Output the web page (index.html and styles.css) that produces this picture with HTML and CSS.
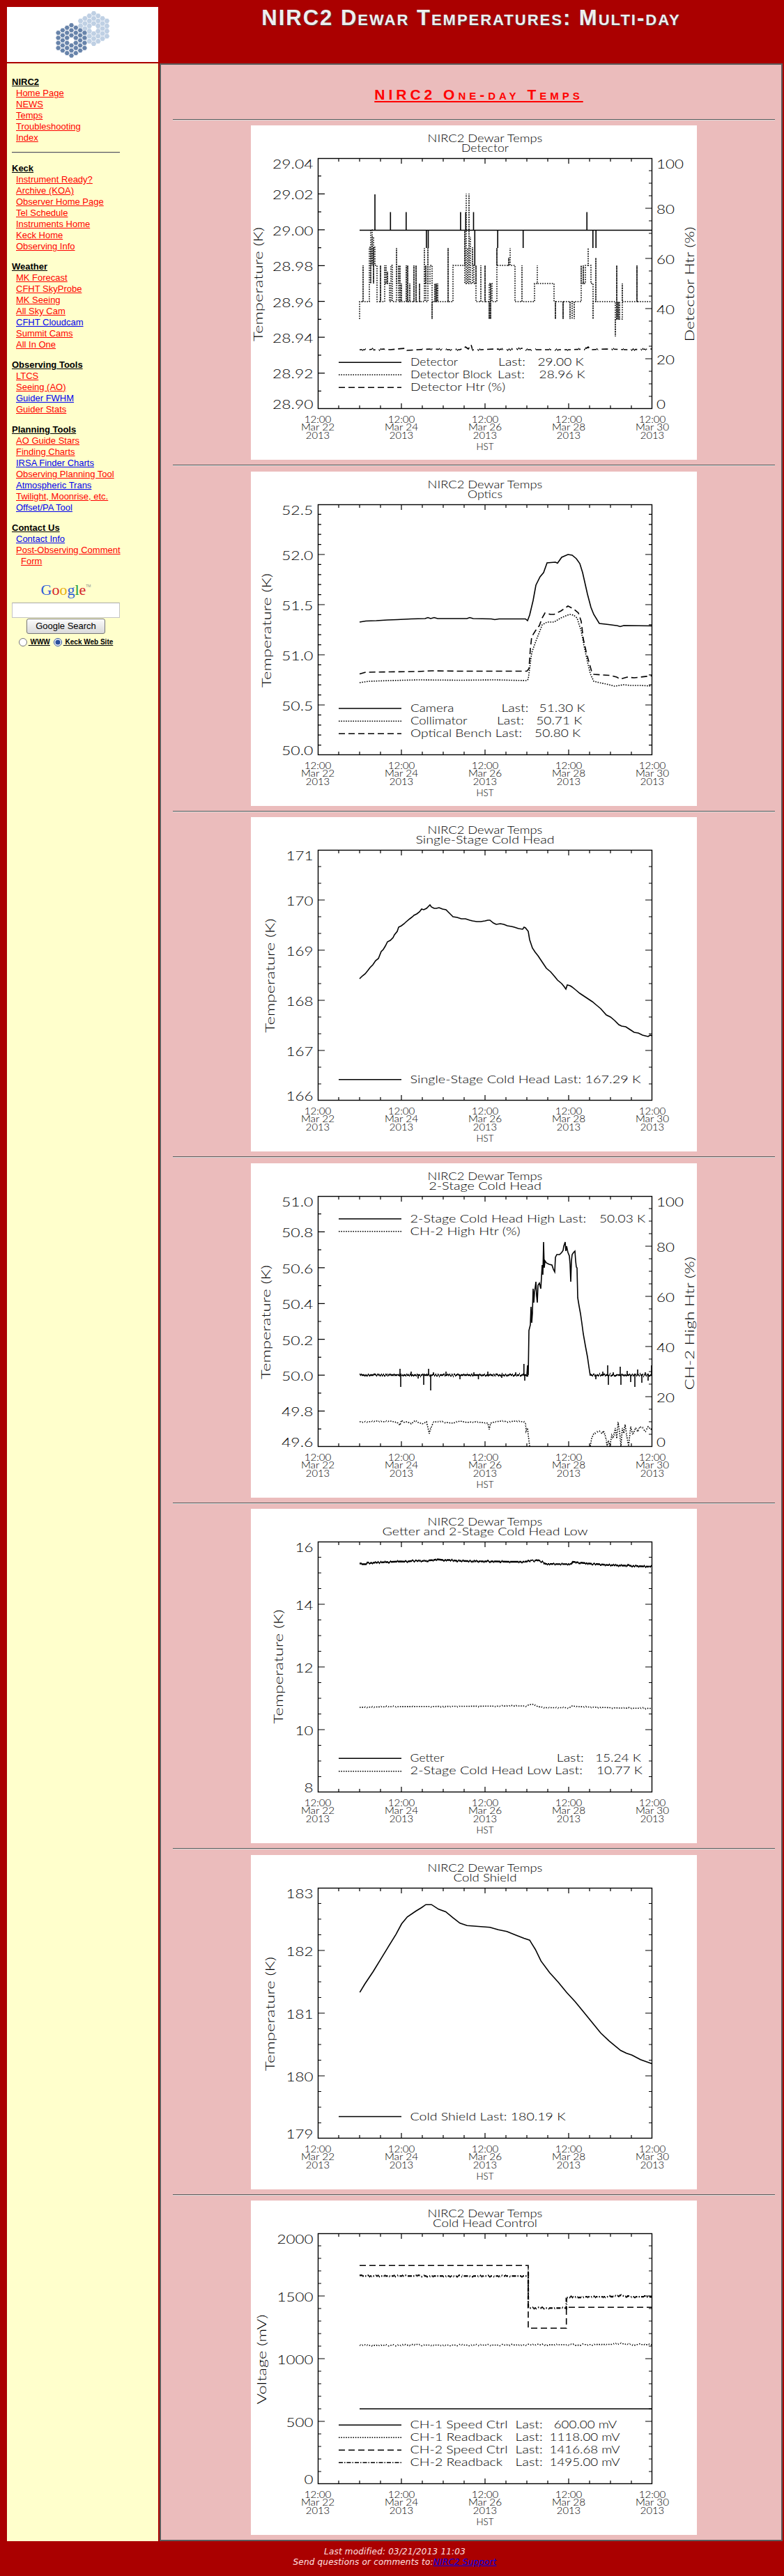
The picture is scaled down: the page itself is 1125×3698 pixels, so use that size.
FILE: index.html
```html
<!DOCTYPE html>
<html lang="en">
<head>
<meta charset="utf-8">
<title>NIRC2 Dewar Temperatures: Multi-day</title>
<link rel="stylesheet" href="styles.css">
</head>
<body>
<div class="page">
  <div class="logo">
    <svg width="217" height="79" viewBox="0 0 217 79">
      <defs>
        <polygon id="hx" points="3.8,0 1.9,3.3 -1.9,3.3 -3.8,0 -1.9,-3.3 1.9,-3.3"/>
        <g id="mir">
          <use href="#hx" x="-18.9" y="-10.91"/><use href="#hx" x="-18.9" y="-3.64"/><use href="#hx" x="-18.9" y="3.64"/><use href="#hx" x="-18.9" y="10.91"/>
          <use href="#hx" x="-12.6" y="-14.55"/><use href="#hx" x="-12.6" y="-7.27"/><use href="#hx" x="-12.6" y="0"/><use href="#hx" x="-12.6" y="7.27"/><use href="#hx" x="-12.6" y="14.55"/>
          <use href="#hx" x="-6.3" y="-18.19"/><use href="#hx" x="-6.3" y="-10.91"/><use href="#hx" x="-6.3" y="-3.64"/><use href="#hx" x="-6.3" y="3.64"/><use href="#hx" x="-6.3" y="10.91"/><use href="#hx" x="-6.3" y="18.19"/>
          <use href="#hx" x="0" y="-21.82"/><use href="#hx" x="0" y="-14.55"/><use href="#hx" x="0" y="-7.27"/><use href="#hx" x="0" y="7.27"/><use href="#hx" x="0" y="14.55"/><use href="#hx" x="0" y="21.82"/>
          <use href="#hx" x="6.3" y="-18.19"/><use href="#hx" x="6.3" y="-10.91"/><use href="#hx" x="6.3" y="-3.64"/><use href="#hx" x="6.3" y="3.64"/><use href="#hx" x="6.3" y="10.91"/><use href="#hx" x="6.3" y="18.19"/>
          <use href="#hx" x="12.6" y="-14.55"/><use href="#hx" x="12.6" y="-7.27"/><use href="#hx" x="12.6" y="0"/><use href="#hx" x="12.6" y="7.27"/><use href="#hx" x="12.6" y="14.55"/>
          <use href="#hx" x="18.9" y="-10.91"/><use href="#hx" x="18.9" y="-3.64"/><use href="#hx" x="18.9" y="3.64"/><use href="#hx" x="18.9" y="10.91"/>
        </g>
      </defs>
      <use href="#mir" x="124.5" y="31" class="seg-light"/>
      <use href="#mir" x="92.5" y="48" class="seg-dark"/>
    </svg>
  </div>
  <div class="banner"><h1>NIRC2 Dewar Temperatures: Multi-day</h1></div>

  <nav class="side">
    <div class="nav">
      <div class="sec">
        <div class="sec-title">NIRC2</div>
        <a href="#">Home Page</a>
        <a href="#">NEWS</a>
        <a href="#">Temps</a>
        <a href="#">Troubleshooting</a>
        <a href="#">Index</a>
      </div>
      <hr>
      <div class="sec">
        <div class="sec-title">Keck</div>
        <a href="#">Instrument Ready?</a>
        <a href="#">Archive (KOA)</a>
        <a href="#">Observer Home Page</a>
        <a href="#">Tel Schedule</a>
        <a href="#">Instruments Home</a>
        <a href="#">Keck Home</a>
        <a href="#">Observing Info</a>
      </div>
      <div class="sec">
        <div class="sec-title">Weather</div>
        <a href="#">MK Forecast</a>
        <a href="#">CFHT SkyProbe</a>
        <a href="#">MK Seeing</a>
        <a href="#">All Sky Cam</a>
        <a class="b" href="#">CFHT Cloudcam</a>
        <a href="#">Summit Cams</a>
        <a href="#">All In One</a>
      </div>
      <div class="sec">
        <div class="sec-title">Observing Tools</div>
        <a href="#">LTCS</a>
        <a href="#">Seeing (AO)</a>
        <a class="b" href="#">Guider FWHM</a>
        <a href="#">Guider Stats</a>
      </div>
      <div class="sec">
        <div class="sec-title">Planning Tools</div>
        <a href="#">AO Guide Stars</a>
        <a href="#">Finding Charts</a>
        <a class="b" href="#">IRSA Finder Charts</a>
        <a href="#">Observing Planning Tool</a>
        <a class="b" href="#">Atmospheric Trans</a>
        <a href="#">Twilight, Moonrise, etc.</a>
        <a class="b" href="#">Offset/PA Tool</a>
      </div>
      <div class="sec">
        <div class="sec-title">Contact Us</div>
        <a class="b" href="#">Contact Info</a>
        <a href="#">Post-Observing Comment Form</a>
      </div>
      <form class="gsearch" action="#">
        <div class="glogo"><span class="gb">G</span><span class="gr">o</span><span class="gy">o</span><span class="gb">g</span><span class="gg">l</span><span class="gr">e</span><span class="tm">TM</span></div>
        <input class="q" type="text" name="q">
        <button class="btn" type="button">Google Search</button>
        <div class="radios">
          <label><input type="radio" name="site"><u>&nbsp;WWW</u></label>
          <label><input type="radio" name="site" checked><u>&nbsp;Keck Web Site</u></label>
        </div>
      </form>
    </div>
  </nav>

  <main class="content">
    <h2><a href="#">NIRC2 One-day Temps</a></h2>
    <hr class="rule">

    <!-- Chart 1: Detector -->
    <svg class="plot" width="640" height="480" viewBox="0 0 640 480">
      <defs>
        <filter id="nzA" filterUnits="userSpaceOnUse" x="0" y="0" width="640" height="480" color-interpolation-filters="sRGB">
          <feTurbulence type="fractalNoise" baseFrequency="0.5 0.003" numOctaves="1" seed="4" result="t"/>
          <feColorMatrix in="t" type="matrix" values="0 0 0 0 0.5  0 1 0 0 0  0 0 0 0 0  0 0 0 0 1" result="m"/>
          <feDisplacementMap in="SourceGraphic" in2="m" scale="4" xChannelSelector="R" yChannelSelector="G"/>
        </filter>
        <filter id="nzB" filterUnits="userSpaceOnUse" x="0" y="0" width="640" height="480" color-interpolation-filters="sRGB">
          <feTurbulence type="fractalNoise" baseFrequency="0.6 0.003" numOctaves="1" seed="9" result="t"/>
          <feColorMatrix in="t" type="matrix" values="0 0 0 0 0.5  0 1 0 0 0  0 0 0 0 0  0 0 0 0 1" result="m"/>
          <feDisplacementMap in="SourceGraphic" in2="m" scale="8" xChannelSelector="R" yChannelSelector="G"/>
        </filter>
        <path id="xt" d="M126 407v-5M156 407v-5M186 407v-5M216 407v-8M246 407v-5M276 407v-5M306 407v-5M336 407v-8M366 407v-5M396 407v-5M426 407v-5M456 407v-8M486 407v-5M516 407v-5M546 407v-5M126 47v5M156 47v5M186 47v5M216 47v8M246 47v5M276 47v5M306 47v5M336 47v8M366 47v5M396 47v5M426 47v5M456 47v8M486 47v5M516 47v5M546 47v5"/>
        <path id="y7i" d="M96 355.6h10M96 304.1h10M96 252.7h10M96 201.3h10M96 149.9h10M96 98.4h10M96 381.3h5M96 329.9h5M96 278.4h5M96 227h5M96 175.6h5M96 124.1h5M96 72.7h5"/>
        <path id="yr" d="M576 335h-10M576 263h-10M576 191h-10M576 119h-10M576 389h-5M576 371h-5M576 353h-5M576 317h-5M576 299h-5M576 281h-5M576 245h-5M576 227h-5M576 209h-5M576 173h-5M576 155h-5M576 137h-5M576 101h-5M576 83h-5M576 65h-5"/>
      </defs>
      <rect class="bg" width="640" height="480"/>
      <rect class="fr" x="96.5" y="47.5" width="479" height="359"/>
      <use class="ax" href="#xt"/>
      <use class="ax" href="#y7i"/>
      <use class="ax" href="#yr"/>
      <text class="pt mid" x="336" y="23.5" textLength="164.8" lengthAdjust="spacingAndGlyphs">NIRC2 Dewar Temps</text>
      <text class="pt mid" x="336" y="38.3" textLength="68.1" lengthAdjust="spacingAndGlyphs">Detector</text>
      <text class="pk end" x="89.5" y="61.5" textLength="58.5" lengthAdjust="spacingAndGlyphs">29.04</text>
      <text class="pk end" x="89.5" y="106.2" textLength="58.5" lengthAdjust="spacingAndGlyphs">29.02</text>
      <text class="pk end" x="89.5" y="157.7" textLength="58.5" lengthAdjust="spacingAndGlyphs">29.00</text>
      <text class="pk end" x="89.5" y="209.1" textLength="58.5" lengthAdjust="spacingAndGlyphs">28.98</text>
      <text class="pk end" x="89.5" y="260.5" textLength="58.5" lengthAdjust="spacingAndGlyphs">28.96</text>
      <text class="pk end" x="89.5" y="311.9" textLength="58.5" lengthAdjust="spacingAndGlyphs">28.94</text>
      <text class="pk end" x="89.5" y="363.4" textLength="58.5" lengthAdjust="spacingAndGlyphs">28.92</text>
      <text class="pk end" x="89.5" y="407" textLength="58.5" lengthAdjust="spacingAndGlyphs">28.90</text>
      <text class="pk" x="582" y="61.5" textLength="39" lengthAdjust="spacingAndGlyphs">100</text>
      <text class="pk" x="582" y="126.8" textLength="26" lengthAdjust="spacingAndGlyphs">80</text>
      <text class="pk" x="582" y="198.8" textLength="26" lengthAdjust="spacingAndGlyphs">60</text>
      <text class="pk" x="582" y="270.8" textLength="26" lengthAdjust="spacingAndGlyphs">40</text>
      <text class="pk" x="582" y="342.8" textLength="26" lengthAdjust="spacingAndGlyphs">20</text>
      <text class="pk" x="582" y="407" textLength="13" lengthAdjust="spacingAndGlyphs">0</text>
      <text class="pk mid" transform="translate(17 228) rotate(-90)" textLength="164" lengthAdjust="spacingAndGlyphs">Temperature (K)</text>
      <text class="pk mid" transform="translate(635.5 228) rotate(-90)" textLength="165" lengthAdjust="spacingAndGlyphs">Detector Htr (%)</text>
      <text class="px" x="96" y="426.7" textLength="38.7" lengthAdjust="spacingAndGlyphs">12:00</text>
      <text class="px" x="216" y="426.7" textLength="38.7" lengthAdjust="spacingAndGlyphs">12:00</text>
      <text class="px" x="336" y="426.7" textLength="38.7" lengthAdjust="spacingAndGlyphs">12:00</text>
      <text class="px" x="456" y="426.7" textLength="38.7" lengthAdjust="spacingAndGlyphs">12:00</text>
      <text class="px" x="576" y="426.7" textLength="38.7" lengthAdjust="spacingAndGlyphs">12:00</text>
      <text class="px" x="96" y="438.3" textLength="48" lengthAdjust="spacingAndGlyphs">Mar 22</text>
      <text class="px" x="216" y="438.3" textLength="48" lengthAdjust="spacingAndGlyphs">Mar 24</text>
      <text class="px" x="336" y="438.3" textLength="48" lengthAdjust="spacingAndGlyphs">Mar 26</text>
      <text class="px" x="456" y="438.3" textLength="48" lengthAdjust="spacingAndGlyphs">Mar 28</text>
      <text class="px" x="576" y="438.3" textLength="48" lengthAdjust="spacingAndGlyphs">Mar 30</text>
      <text class="px" x="96" y="449.5" textLength="34.4" lengthAdjust="spacingAndGlyphs">2013</text>
      <text class="px" x="216" y="449.5" textLength="34.4" lengthAdjust="spacingAndGlyphs">2013</text>
      <text class="px" x="336" y="449.5" textLength="34.4" lengthAdjust="spacingAndGlyphs">2013</text>
      <text class="px" x="456" y="449.5" textLength="34.4" lengthAdjust="spacingAndGlyphs">2013</text>
      <text class="px" x="576" y="449.5" textLength="34.4" lengthAdjust="spacingAndGlyphs">2013</text>
      <text class="px" x="336" y="466" textLength="25" lengthAdjust="spacingAndGlyphs">HST</text>
      <path class="ln" d="M126 340.3H216"/>
      <path class="ln dot" d="M126 358H216"/>
      <path class="ln dash" d="M126 376.3H216"/>
      <text class="pt" x="229" y="345" textLength="68.1" lengthAdjust="spacingAndGlyphs">Detector</text>
      <text class="pt" x="355" y="345" textLength="39" lengthAdjust="spacingAndGlyphs">Last:</text>
      <text class="pt" x="411.5" y="345" textLength="66" lengthAdjust="spacingAndGlyphs">29.00 K</text>
      <text class="pt" x="229" y="362.7" textLength="117" lengthAdjust="spacingAndGlyphs">Detector Block</text>
      <text class="pt" x="354" y="362.7" textLength="39" lengthAdjust="spacingAndGlyphs">Last:</text>
      <text class="pt" x="413.6" y="362.7" textLength="66" lengthAdjust="spacingAndGlyphs">28.96 K</text>
      <text class="pt" x="229" y="380.7" textLength="136.2" lengthAdjust="spacingAndGlyphs">Detector Htr (%)</text>
      <path class="ln" d="M156 150.5H576M178 150.5V99M200.3 150.5V124.5M222.8 150.5V124.5M300.9 150.5V124.5M308.3 150.5V124.5M319.5 150.5V124.5M482.2 150.5V124.5M251.9 150.5V176M254.5 150.5V176M354.2 150.5V176M390.7 150.5V176M490.8 150.5V176M495.2 150.5V176M321.3 150.5V201.5"/>
      <path class="ln dot" d="M156 278V253H161V201V253H170V227V175H172V227V150H174V201V160H176V227V175H178V201H181V253H186V201V253H192V201V227H194V201V227H196V210V227H199V253H201V201H203V253H209V176V227H212V201V253H214V201V253H216V227V253H219V253H223V201V253H225V201V253H228V227V253H234V201V253H237V201V253H242V227V253H249V176V227H251V201V253H254V176V227H257V201H260V278V253H264V227V253H266V227V253H268V227V253H275V253H283V176V253H290V201H303V201H307V150V227H309V98V227H311V176V227H313V98V201H315V160V227H318V175V201H320V227H323V201V253H330V201V253H336V201V253H342V278V227H344V278V227H346V253H353V176V201H360V201H370V190V201H372V176V201H379V253H389V201V253H405V253H407V227H411V201V227H434V227H435V253H437V278V253H448V278V253H458V278V253H461V278V253H464V278V253H470V253H474V201V227H477V201V227H480V201H484V176V201H488V201V227H491V278V253H495V190V253H500V253H523V303V278H525V201V278H527V253V278H529V253V278H533V227V253H554V201V253H559V253H576"/>
      <path class="ln dash" filter="url(#nzA)" d="M156 322L170 322L175 321L180 323L190 321L200 322L210 321L222 320L224 323L240 322L260 321L280 322L300 322L305 320L308 318L312 321L316 315L318 322L330 322L350 321L370 322L390 320L392 322L420 322L460 322L480 321L484 318L488 322L510 321L540 322L576 321"/>
    </svg>
    <hr class="sep">

    <!-- Chart 2: Optics -->
    <svg class="plot" width="640" height="480" viewBox="0 0 640 480">
      <defs>
        <path id="y5f" d="M96 335h10M96 263h10M96 191h10M96 119h10M96 392.6h5M96 378.2h5M96 363.8h5M96 349.4h5M96 320.6h5M96 306.2h5M96 291.8h5M96 277.4h5M96 248.6h5M96 234.2h5M96 219.8h5M96 205.4h5M96 176.6h5M96 162.2h5M96 147.8h5M96 133.4h5M96 104.6h5M96 90.2h5M96 75.8h5M96 61.4h5"/>
      </defs>
      <rect class="bg" width="640" height="480"/>
      <rect class="fr" x="96.5" y="47.5" width="479" height="359"/>
      <use class="ax" href="#xt"/>
      <use class="ax" href="#y5f"/>
      <use class="ax" href="#y5f" transform="matrix(-1 0 0 1 672 0)"/>
      <text class="pt mid" x="336" y="23.5" textLength="164.8" lengthAdjust="spacingAndGlyphs">NIRC2 Dewar Temps</text>
      <text class="pt mid" x="336" y="38.3" textLength="50" lengthAdjust="spacingAndGlyphs">Optics</text>
      <text class="pk end" x="89.5" y="61.5" textLength="45.5" lengthAdjust="spacingAndGlyphs">52.5</text>
      <text class="pk end" x="89.5" y="126.8" textLength="45.5" lengthAdjust="spacingAndGlyphs">52.0</text>
      <text class="pk end" x="89.5" y="198.8" textLength="45.5" lengthAdjust="spacingAndGlyphs">51.5</text>
      <text class="pk end" x="89.5" y="270.8" textLength="45.5" lengthAdjust="spacingAndGlyphs">51.0</text>
      <text class="pk end" x="89.5" y="342.8" textLength="45.5" lengthAdjust="spacingAndGlyphs">50.5</text>
      <text class="pk end" x="89.5" y="407" textLength="45.5" lengthAdjust="spacingAndGlyphs">50.0</text>
      <text class="pk mid" transform="translate(28.5 228) rotate(-90)" textLength="164" lengthAdjust="spacingAndGlyphs">Temperature (K)</text>
      <text class="px" x="96" y="426.7" textLength="38.7" lengthAdjust="spacingAndGlyphs">12:00</text>
      <text class="px" x="216" y="426.7" textLength="38.7" lengthAdjust="spacingAndGlyphs">12:00</text>
      <text class="px" x="336" y="426.7" textLength="38.7" lengthAdjust="spacingAndGlyphs">12:00</text>
      <text class="px" x="456" y="426.7" textLength="38.7" lengthAdjust="spacingAndGlyphs">12:00</text>
      <text class="px" x="576" y="426.7" textLength="38.7" lengthAdjust="spacingAndGlyphs">12:00</text>
      <text class="px" x="96" y="438.3" textLength="48" lengthAdjust="spacingAndGlyphs">Mar 22</text>
      <text class="px" x="216" y="438.3" textLength="48" lengthAdjust="spacingAndGlyphs">Mar 24</text>
      <text class="px" x="336" y="438.3" textLength="48" lengthAdjust="spacingAndGlyphs">Mar 26</text>
      <text class="px" x="456" y="438.3" textLength="48" lengthAdjust="spacingAndGlyphs">Mar 28</text>
      <text class="px" x="576" y="438.3" textLength="48" lengthAdjust="spacingAndGlyphs">Mar 30</text>
      <text class="px" x="96" y="449.5" textLength="34.4" lengthAdjust="spacingAndGlyphs">2013</text>
      <text class="px" x="216" y="449.5" textLength="34.4" lengthAdjust="spacingAndGlyphs">2013</text>
      <text class="px" x="336" y="449.5" textLength="34.4" lengthAdjust="spacingAndGlyphs">2013</text>
      <text class="px" x="456" y="449.5" textLength="34.4" lengthAdjust="spacingAndGlyphs">2013</text>
      <text class="px" x="576" y="449.5" textLength="34.4" lengthAdjust="spacingAndGlyphs">2013</text>
      <text class="px" x="336" y="466" textLength="25" lengthAdjust="spacingAndGlyphs">HST</text>
      <path class="ln" d="M126 340H216"/>
      <path class="ln dot" d="M126 358.3H216"/>
      <path class="ln dash" d="M126 376.3H216"/>
      <text class="pt" x="229" y="345" textLength="62.4" lengthAdjust="spacingAndGlyphs">Camera</text>
      <text class="pt" x="359.4" y="345" textLength="39" lengthAdjust="spacingAndGlyphs">Last:</text>
      <text class="pt" x="413.6" y="345" textLength="66" lengthAdjust="spacingAndGlyphs">51.30 K</text>
      <text class="pt" x="229" y="363" textLength="81.6" lengthAdjust="spacingAndGlyphs">Collimator</text>
      <text class="pt" x="352.9" y="363" textLength="39" lengthAdjust="spacingAndGlyphs">Last:</text>
      <text class="pt" x="409.3" y="363" textLength="66" lengthAdjust="spacingAndGlyphs">50.71 K</text>
      <text class="pt" x="229" y="381" textLength="160" lengthAdjust="spacingAndGlyphs">Optical Bench Last:</text>
      <text class="pt" x="407.1" y="381" textLength="66" lengthAdjust="spacingAndGlyphs">50.80 K</text>
      <path class="ln" d="M156 216L165 214.5L180 214L196 213L210 212.5L230 211.5L250 211L254 209.5L258 211L263 209.5L268 211L310 211L314 209.5L319 211L345 211.5L350 212.5L356 211.5L394 211.5L397 214L400 206L405 185L409 163L415 151L420 145L425 131L437 130L440 131.5L446 123L455 119L461 120L467 125L472 132L476 145L483 176L488 195L492 205L500 218L513 219.5L526 221.3L530 222.5L535 221L576 221.5"/>
      <path class="ln dot" d="M156 303L170 301L200 300L240 299L300 299.5L350 299L396 300L398 298L401 275L403 260L408 246L413 233L418 220L425 216L435 216L445 210L457 205L463 206L468 210L474 229L478 250L483 273L487 290L492 301L500 303L510 305L522 308L535 306L545 307L560 307L576 308"/>
      <path class="ln dash" d="M156 290.5L165 288L200 287.5L240 287L260 286L300 286.5L396 286.5L399 283L401 255L403 237L408 229L414 221L418 210L422 203L430 205L435 205L445 200L455 193L463 197L470 203L474 215L477 240L481 258L485 273L489 287L492 291L505 292L515 292.5L525 295L530 298L540 295L550 296L576 293"/>
    </svg>
    <hr class="sep">

    <!-- Chart 3: Single-Stage Cold Head -->
    <svg class="plot" width="640" height="480" viewBox="0 0 640 480">
      <defs>
        <path id="y5t" d="M96 335h10M96 263h10M96 191h10M96 119h10M96 383h5M96 359h5M96 311h5M96 287h5M96 239h5M96 215h5M96 167h5M96 143h5M96 95h5M96 71h5"/>
      </defs>
      <rect class="bg" width="640" height="480"/>
      <rect class="fr" x="96.5" y="47.5" width="479" height="359"/>
      <use class="ax" href="#xt"/>
      <use class="ax" href="#y5t"/>
      <use class="ax" href="#y5t" transform="matrix(-1 0 0 1 672 0)"/>
      <text class="pt mid" x="336" y="23.5" textLength="164.8" lengthAdjust="spacingAndGlyphs">NIRC2 Dewar Temps</text>
      <text class="pt mid" x="336" y="37.8" textLength="199" lengthAdjust="spacingAndGlyphs">Single-Stage Cold Head</text>
      <text class="pk end" x="89.5" y="61.5" textLength="39" lengthAdjust="spacingAndGlyphs">171</text>
      <text class="pk end" x="89.5" y="126.8" textLength="39" lengthAdjust="spacingAndGlyphs">170</text>
      <text class="pk end" x="89.5" y="198.8" textLength="39" lengthAdjust="spacingAndGlyphs">169</text>
      <text class="pk end" x="89.5" y="270.8" textLength="39" lengthAdjust="spacingAndGlyphs">168</text>
      <text class="pk end" x="89.5" y="342.8" textLength="39" lengthAdjust="spacingAndGlyphs">167</text>
      <text class="pk end" x="89.5" y="407" textLength="39" lengthAdjust="spacingAndGlyphs">166</text>
      <text class="pk mid" transform="translate(34 227.5) rotate(-90)" textLength="164" lengthAdjust="spacingAndGlyphs">Temperature (K)</text>
      <text class="px" x="96" y="426.7" textLength="38.7" lengthAdjust="spacingAndGlyphs">12:00</text>
      <text class="px" x="216" y="426.7" textLength="38.7" lengthAdjust="spacingAndGlyphs">12:00</text>
      <text class="px" x="336" y="426.7" textLength="38.7" lengthAdjust="spacingAndGlyphs">12:00</text>
      <text class="px" x="456" y="426.7" textLength="38.7" lengthAdjust="spacingAndGlyphs">12:00</text>
      <text class="px" x="576" y="426.7" textLength="38.7" lengthAdjust="spacingAndGlyphs">12:00</text>
      <text class="px" x="96" y="438.3" textLength="48" lengthAdjust="spacingAndGlyphs">Mar 22</text>
      <text class="px" x="216" y="438.3" textLength="48" lengthAdjust="spacingAndGlyphs">Mar 24</text>
      <text class="px" x="336" y="438.3" textLength="48" lengthAdjust="spacingAndGlyphs">Mar 26</text>
      <text class="px" x="456" y="438.3" textLength="48" lengthAdjust="spacingAndGlyphs">Mar 28</text>
      <text class="px" x="576" y="438.3" textLength="48" lengthAdjust="spacingAndGlyphs">Mar 30</text>
      <text class="px" x="96" y="449.5" textLength="34.4" lengthAdjust="spacingAndGlyphs">2013</text>
      <text class="px" x="216" y="449.5" textLength="34.4" lengthAdjust="spacingAndGlyphs">2013</text>
      <text class="px" x="336" y="449.5" textLength="34.4" lengthAdjust="spacingAndGlyphs">2013</text>
      <text class="px" x="456" y="449.5" textLength="34.4" lengthAdjust="spacingAndGlyphs">2013</text>
      <text class="px" x="576" y="449.5" textLength="34.4" lengthAdjust="spacingAndGlyphs">2013</text>
      <text class="px" x="336" y="466" textLength="25" lengthAdjust="spacingAndGlyphs">HST</text>
      <path class="ln" d="M126 376.7H216"/>
      <text class="pt" x="228.6" y="381.5" textLength="331" lengthAdjust="spacingAndGlyphs">Single-Stage Cold Head Last: 167.29 K</text>
      <path class="ln" d="M156 232L160 228L164 225L168 220L171 216L175 212L179 206L183 203L187 193L190 190L193 185L196 179L200 177L204 173L206 169L210 164L212 158L216 156L220 153L222 151L228 146L232 143L234 141L238 139L242 136L245 132L248 133L252 131L257 126L259 129L263 131L266 131L270 130L275 132L280 133L283 136L288 141L290 143L296 144L302 146L308 146L314 148L318 149L324 150L330 150L336 149L340 148L343 148L348 152L352 154L358 153L363 154L368 156L374 157L378 158L384 160L390 161L392 158L394 159L398 164L400 176L404 188L408 194L412 199L416 205L420 211L424 217L430 222L436 229L440 234L446 239L450 244L452 247L454 241L458 242L461 244L466 248L472 253L478 257L484 261L490 265L496 270L502 275L510 284L516 287L522 292L528 298L532 300L538 301L544 305L550 309L556 310L562 313L566 314L570 315L573 313L576 314"/>
    </svg>
    <hr class="sep">

    <!-- Chart 4: 2-Stage Cold Head -->
    <svg class="plot" width="640" height="480" viewBox="0 0 640 480">
      <rect class="bg" width="640" height="480"/>
      <rect class="fr" x="96.5" y="47.5" width="479" height="359"/>
      <use class="ax" href="#xt"/>
      <use class="ax" href="#y7i"/>
      <use class="ax" href="#yr"/>
      <text class="pt mid" x="336" y="23.5" textLength="164.8" lengthAdjust="spacingAndGlyphs">NIRC2 Dewar Temps</text>
      <text class="pt mid" x="336" y="37.8" textLength="161.7" lengthAdjust="spacingAndGlyphs">2-Stage Cold Head</text>
      <text class="pk end" x="89.5" y="61.5" textLength="45.5" lengthAdjust="spacingAndGlyphs">51.0</text>
      <text class="pk end" x="89.5" y="106.2" textLength="45.5" lengthAdjust="spacingAndGlyphs">50.8</text>
      <text class="pk end" x="89.5" y="157.7" textLength="45.5" lengthAdjust="spacingAndGlyphs">50.6</text>
      <text class="pk end" x="89.5" y="209.1" textLength="45.5" lengthAdjust="spacingAndGlyphs">50.4</text>
      <text class="pk end" x="89.5" y="260.5" textLength="45.5" lengthAdjust="spacingAndGlyphs">50.2</text>
      <text class="pk end" x="89.5" y="311.9" textLength="45.5" lengthAdjust="spacingAndGlyphs">50.0</text>
      <text class="pk end" x="89.5" y="363.4" textLength="45.5" lengthAdjust="spacingAndGlyphs">49.8</text>
      <text class="pk end" x="89.5" y="407" textLength="45.5" lengthAdjust="spacingAndGlyphs">49.6</text>
      <text class="pk" x="582" y="61.5" textLength="39" lengthAdjust="spacingAndGlyphs">100</text>
      <text class="pk" x="582" y="126.8" textLength="26" lengthAdjust="spacingAndGlyphs">80</text>
      <text class="pk" x="582" y="198.8" textLength="26" lengthAdjust="spacingAndGlyphs">60</text>
      <text class="pk" x="582" y="270.8" textLength="26" lengthAdjust="spacingAndGlyphs">40</text>
      <text class="pk" x="582" y="342.8" textLength="26" lengthAdjust="spacingAndGlyphs">20</text>
      <text class="pk" x="582" y="407" textLength="13" lengthAdjust="spacingAndGlyphs">0</text>
      <text class="pk mid" transform="translate(28 228) rotate(-90)" textLength="164" lengthAdjust="spacingAndGlyphs">Temperature (K)</text>
      <text class="pk mid" transform="translate(635.5 229.7) rotate(-90)" textLength="191.5" lengthAdjust="spacingAndGlyphs">CH-2 High Htr (%)</text>
      <text class="px" x="96" y="426.7" textLength="38.7" lengthAdjust="spacingAndGlyphs">12:00</text>
      <text class="px" x="216" y="426.7" textLength="38.7" lengthAdjust="spacingAndGlyphs">12:00</text>
      <text class="px" x="336" y="426.7" textLength="38.7" lengthAdjust="spacingAndGlyphs">12:00</text>
      <text class="px" x="456" y="426.7" textLength="38.7" lengthAdjust="spacingAndGlyphs">12:00</text>
      <text class="px" x="576" y="426.7" textLength="38.7" lengthAdjust="spacingAndGlyphs">12:00</text>
      <text class="px" x="96" y="438.3" textLength="48" lengthAdjust="spacingAndGlyphs">Mar 22</text>
      <text class="px" x="216" y="438.3" textLength="48" lengthAdjust="spacingAndGlyphs">Mar 24</text>
      <text class="px" x="336" y="438.3" textLength="48" lengthAdjust="spacingAndGlyphs">Mar 26</text>
      <text class="px" x="456" y="438.3" textLength="48" lengthAdjust="spacingAndGlyphs">Mar 28</text>
      <text class="px" x="576" y="438.3" textLength="48" lengthAdjust="spacingAndGlyphs">Mar 30</text>
      <text class="px" x="96" y="449.5" textLength="34.4" lengthAdjust="spacingAndGlyphs">2013</text>
      <text class="px" x="216" y="449.5" textLength="34.4" lengthAdjust="spacingAndGlyphs">2013</text>
      <text class="px" x="336" y="449.5" textLength="34.4" lengthAdjust="spacingAndGlyphs">2013</text>
      <text class="px" x="456" y="449.5" textLength="34.4" lengthAdjust="spacingAndGlyphs">2013</text>
      <text class="px" x="576" y="449.5" textLength="34.4" lengthAdjust="spacingAndGlyphs">2013</text>
      <text class="px" x="336" y="466" textLength="25" lengthAdjust="spacingAndGlyphs">HST</text>
      <path class="ln" d="M126 79.8H216"/>
      <path class="ln dot" d="M126 97.8H216"/>
      <text class="pt" x="228.6" y="84.5" textLength="252.7" lengthAdjust="spacingAndGlyphs">2-Stage Cold Head High Last:</text>
      <text class="pt" x="500" y="84.5" textLength="66" lengthAdjust="spacingAndGlyphs">50.03 K</text>
      <text class="pt" x="228.6" y="102.5" textLength="158" lengthAdjust="spacingAndGlyphs">CH-2 High Htr (%)</text>
      <path class="ln thick" filter="url(#nzB)" d="M156 304H398M487 304H576"/>
      <path class="ln" d="M214 304V295M215 304V321M230 304V299M240 304V309M248 304V318M255 304V295M258 304V326M262 304V300M280 304V299M300 304V310M320 304V300M326.5 304V310M340 304V299M360 304V308M380 304V300M391.8 304V288M393 304V312M495 304V310M505 304V299M512 304V290M513 304V318M520 304V300M530 304V292M531 304V318M540 304V298M545 304V314M551 304V321M555 304V296M561 304V315M566 304V300M570 304V312M575 304V290"/>
      <path class="ln" d="M396 304L397 290L398 304L399 240L401 232L402 206L403 229L404 215L405 180L406 200L407 185L408 178L409 170L410 190L411 200L412 175L414 172L416 180L418 146L419 160L420 113L421 150L422 140L424 143L428 145L432 146L434 152L436 156L437 135L439 131L443 131L446 128L448 125L449 119L451 113L452 126L453 119L455 128L457 133L458 145L459 170L460 140L461 131L463 128L465 126L466 140L467 149L468 150L469 193L471 205L473 216L475 230L477 245L480 262L483 278L485 292L487 305"/>
      <path class="ln dot" filter="url(#nzA)" d="M156 371L170 371L180 370L190 371L200 370L210 372L214 376L216 369L220 372L224 371L230 374L236 369L240 372L246 374L252 371L256 388L258 380L262 372L270 370L280 372L290 373L300 370L310 372L320 371L330 372L340 373L342 382L344 373L350 371L360 370L370 371L380 370L390 371L394 372L395 384L397 380L398 390L400 406"/>
      <path class="ln dot" filter="url(#nzA)" d="M487 406L489 395L492 388L496 386L500 385L504 388L506 384L509 393L511 406L513 398L515 406L518 390L520 395L523 380L525 395L527 372L529 385L531 406L533 380L535 388L537 375L540 395L542 406L545 378L548 390L552 380L555 385L558 378L562 380L566 385L570 378L574 382L576 380"/>
    </svg>
    <hr class="sep">

    <!-- Chart 5: Getter and 2-Stage Cold Head Low -->
    <svg class="plot" width="640" height="480" viewBox="0 0 640 480">
      <defs>
        <path id="y4q" d="M96 317h10M96 227h10M96 137h10M96 384.5h5M96 362h5M96 339.5h5M96 294.5h5M96 272h5M96 249.5h5M96 204.5h5M96 182h5M96 159.5h5M96 114.5h5M96 92h5M96 69.5h5"/>
      </defs>
      <rect class="bg" width="640" height="480"/>
      <rect class="fr" x="96.5" y="47.5" width="479" height="359"/>
      <use class="ax" href="#xt"/>
      <use class="ax" href="#y4q"/>
      <use class="ax" href="#y4q" transform="matrix(-1 0 0 1 672 0)"/>
      <text class="pt mid" x="336" y="23.5" textLength="164.8" lengthAdjust="spacingAndGlyphs">NIRC2 Dewar Temps</text>
      <text class="pt mid" x="336" y="37.8" textLength="295" lengthAdjust="spacingAndGlyphs">Getter and 2-Stage Cold Head Low</text>
      <text class="pk end" x="89.5" y="61.5" textLength="26" lengthAdjust="spacingAndGlyphs">16</text>
      <text class="pk end" x="89.5" y="144.8" textLength="26" lengthAdjust="spacingAndGlyphs">14</text>
      <text class="pk end" x="89.5" y="234.8" textLength="26" lengthAdjust="spacingAndGlyphs">12</text>
      <text class="pk end" x="89.5" y="324.8" textLength="26" lengthAdjust="spacingAndGlyphs">10</text>
      <text class="pk end" x="89.5" y="407" textLength="13" lengthAdjust="spacingAndGlyphs">8</text>
      <text class="pk mid" transform="translate(46.3 226.5) rotate(-90)" textLength="164" lengthAdjust="spacingAndGlyphs">Temperature (K)</text>
      <text class="px" x="96" y="426.7" textLength="38.7" lengthAdjust="spacingAndGlyphs">12:00</text>
      <text class="px" x="216" y="426.7" textLength="38.7" lengthAdjust="spacingAndGlyphs">12:00</text>
      <text class="px" x="336" y="426.7" textLength="38.7" lengthAdjust="spacingAndGlyphs">12:00</text>
      <text class="px" x="456" y="426.7" textLength="38.7" lengthAdjust="spacingAndGlyphs">12:00</text>
      <text class="px" x="576" y="426.7" textLength="38.7" lengthAdjust="spacingAndGlyphs">12:00</text>
      <text class="px" x="96" y="438.3" textLength="48" lengthAdjust="spacingAndGlyphs">Mar 22</text>
      <text class="px" x="216" y="438.3" textLength="48" lengthAdjust="spacingAndGlyphs">Mar 24</text>
      <text class="px" x="336" y="438.3" textLength="48" lengthAdjust="spacingAndGlyphs">Mar 26</text>
      <text class="px" x="456" y="438.3" textLength="48" lengthAdjust="spacingAndGlyphs">Mar 28</text>
      <text class="px" x="576" y="438.3" textLength="48" lengthAdjust="spacingAndGlyphs">Mar 30</text>
      <text class="px" x="96" y="449.5" textLength="34.4" lengthAdjust="spacingAndGlyphs">2013</text>
      <text class="px" x="216" y="449.5" textLength="34.4" lengthAdjust="spacingAndGlyphs">2013</text>
      <text class="px" x="336" y="449.5" textLength="34.4" lengthAdjust="spacingAndGlyphs">2013</text>
      <text class="px" x="456" y="449.5" textLength="34.4" lengthAdjust="spacingAndGlyphs">2013</text>
      <text class="px" x="576" y="449.5" textLength="34.4" lengthAdjust="spacingAndGlyphs">2013</text>
      <text class="px" x="336" y="466" textLength="25" lengthAdjust="spacingAndGlyphs">HST</text>
      <path class="ln" d="M126 358.3H216"/>
      <path class="ln dot" d="M126 376.7H216"/>
      <text class="pt" x="228.6" y="363" textLength="48.9" lengthAdjust="spacingAndGlyphs">Getter</text>
      <text class="pt" x="438.8" y="363" textLength="39" lengthAdjust="spacingAndGlyphs">Last:</text>
      <text class="pt" x="493.9" y="363" textLength="66" lengthAdjust="spacingAndGlyphs">15.24 K</text>
      <text class="pt" x="228.6" y="381" textLength="247.5" lengthAdjust="spacingAndGlyphs">2-Stage Cold Head Low Last:</text>
      <text class="pt" x="495.9" y="381" textLength="66" lengthAdjust="spacingAndGlyphs">10.77 K</text>
      <path class="ln thick" filter="url(#nzA)" d="M156 79.5L166 79.5L167 78L175 77.5L185 77L195 76.5L205 76L215 75.5L222 76L230 75L240 75L250 74.8L256 74L262 73.5L268 72.5L275 73.5L285 73.5L295 74.5L310 75L330 75.5L350 75.5L370 76L390 76L398 75.5L402 74L406 75L410 73.5L414 75.5L418 76L423 79L440 79.3L455 79.3L460 79L462 76L470 77L480 78L490 79L500 79.5L510 80.5L520 81L530 81.5L540 81.5L550 82L560 82.5L570 83L576 83"/>
      <path class="ln dot" filter="url(#nzA)" d="M156 285L200 284L300 283.5L395 283L400 281L404 280.5L412 284L424 285.5L457 285.5L461 283L470 284L500 285L530 286L576 286.5"/>
    </svg>
    <hr class="sep">

    <!-- Chart 6: Cold Shield -->
    <svg class="plot" width="640" height="480" viewBox="0 0 640 480">
      <rect class="bg" width="640" height="480"/>
      <rect class="fr" x="96.5" y="47.5" width="479" height="359"/>
      <use class="ax" href="#xt"/>
      <use class="ax" href="#y4q"/>
      <use class="ax" href="#y4q" transform="matrix(-1 0 0 1 672 0)"/>
      <text class="pt mid" x="336" y="23.5" textLength="164.8" lengthAdjust="spacingAndGlyphs">NIRC2 Dewar Temps</text>
      <text class="pt mid" x="336" y="37.8" textLength="91" lengthAdjust="spacingAndGlyphs">Cold Shield</text>
      <text class="pk end" x="89.5" y="61.5" textLength="39" lengthAdjust="spacingAndGlyphs">183</text>
      <text class="pk end" x="89.5" y="144.8" textLength="39" lengthAdjust="spacingAndGlyphs">182</text>
      <text class="pk end" x="89.5" y="234.8" textLength="39" lengthAdjust="spacingAndGlyphs">181</text>
      <text class="pk end" x="89.5" y="324.8" textLength="39" lengthAdjust="spacingAndGlyphs">180</text>
      <text class="pk end" x="89.5" y="407" textLength="39" lengthAdjust="spacingAndGlyphs">179</text>
      <text class="pk mid" transform="translate(34 228) rotate(-90)" textLength="164" lengthAdjust="spacingAndGlyphs">Temperature (K)</text>
      <text class="px" x="96" y="426.7" textLength="38.7" lengthAdjust="spacingAndGlyphs">12:00</text>
      <text class="px" x="216" y="426.7" textLength="38.7" lengthAdjust="spacingAndGlyphs">12:00</text>
      <text class="px" x="336" y="426.7" textLength="38.7" lengthAdjust="spacingAndGlyphs">12:00</text>
      <text class="px" x="456" y="426.7" textLength="38.7" lengthAdjust="spacingAndGlyphs">12:00</text>
      <text class="px" x="576" y="426.7" textLength="38.7" lengthAdjust="spacingAndGlyphs">12:00</text>
      <text class="px" x="96" y="438.3" textLength="48" lengthAdjust="spacingAndGlyphs">Mar 22</text>
      <text class="px" x="216" y="438.3" textLength="48" lengthAdjust="spacingAndGlyphs">Mar 24</text>
      <text class="px" x="336" y="438.3" textLength="48" lengthAdjust="spacingAndGlyphs">Mar 26</text>
      <text class="px" x="456" y="438.3" textLength="48" lengthAdjust="spacingAndGlyphs">Mar 28</text>
      <text class="px" x="576" y="438.3" textLength="48" lengthAdjust="spacingAndGlyphs">Mar 30</text>
      <text class="px" x="96" y="449.5" textLength="34.4" lengthAdjust="spacingAndGlyphs">2013</text>
      <text class="px" x="216" y="449.5" textLength="34.4" lengthAdjust="spacingAndGlyphs">2013</text>
      <text class="px" x="336" y="449.5" textLength="34.4" lengthAdjust="spacingAndGlyphs">2013</text>
      <text class="px" x="456" y="449.5" textLength="34.4" lengthAdjust="spacingAndGlyphs">2013</text>
      <text class="px" x="576" y="449.5" textLength="34.4" lengthAdjust="spacingAndGlyphs">2013</text>
      <text class="px" x="336" y="466" textLength="25" lengthAdjust="spacingAndGlyphs">HST</text>
      <path class="ln" d="M126 375.5H216"/>
      <text class="pt" x="228.6" y="380.7" textLength="223" lengthAdjust="spacingAndGlyphs">Cold Shield Last: 180.19 K</text>
      <path class="ln" d="M156.3 197.2L163.3 185.5L175.5 167.2L187.8 147.2L195.9 133.8L208.2 113.8L216.3 98.8L224.5 88.8L236.7 80.5L244.9 75.5L251 71.2L259.2 71.2L269.4 77.8L279.6 81.5L289.8 89.8L300 97.8L310.2 101.2L326.5 102.5L342.9 103.8L355.1 107.2L367.3 109.8L379.6 114.8L391.8 119.5L400 122.2L408.2 135.5L416.3 152.2L428.6 168.8L440.8 182.2L453.1 197.2L465.3 210.5L477.6 225.5L489.8 240.5L502 255.5L514.3 267.2L530.6 280.5L538.8 284.5L546.9 287.2L559.2 293.8L576 299.8"/>
    </svg>
    <hr class="sep">

    <!-- Chart 7: Cold Head Control -->
    <svg class="plot" width="640" height="480" viewBox="0 0 640 480">
      <defs>
        <path id="y4f" d="M96 317h10M96 227h10M96 137h10M96 389h5M96 371h5M96 353h5M96 335h5M96 299h5M96 281h5M96 263h5M96 245h5M96 209h5M96 191h5M96 173h5M96 155h5M96 119h5M96 101h5M96 83h5M96 65h5"/>
      </defs>
      <rect class="bg" width="640" height="480"/>
      <rect class="fr" x="96.5" y="47.5" width="479" height="359"/>
      <use class="ax" href="#xt"/>
      <use class="ax" href="#y4f"/>
      <use class="ax" href="#y4f" transform="matrix(-1 0 0 1 672 0)"/>
      <text class="pt mid" x="336" y="23.5" textLength="164.8" lengthAdjust="spacingAndGlyphs">NIRC2 Dewar Temps</text>
      <text class="pt mid" x="336" y="37.8" textLength="149.8" lengthAdjust="spacingAndGlyphs">Cold Head Control</text>
      <text class="pk end" x="89.5" y="61.5" textLength="52" lengthAdjust="spacingAndGlyphs">2000</text>
      <text class="pk end" x="89.5" y="144.8" textLength="52" lengthAdjust="spacingAndGlyphs">1500</text>
      <text class="pk end" x="89.5" y="234.8" textLength="52" lengthAdjust="spacingAndGlyphs">1000</text>
      <text class="pk end" x="89.5" y="324.8" textLength="39" lengthAdjust="spacingAndGlyphs">500</text>
      <text class="pk end" x="89.5" y="407" textLength="13" lengthAdjust="spacingAndGlyphs">0</text>
      <text class="pk mid" transform="translate(22 228) rotate(-90)" textLength="129" lengthAdjust="spacingAndGlyphs">Voltage (mV)</text>
      <text class="px" x="96" y="426.7" textLength="38.7" lengthAdjust="spacingAndGlyphs">12:00</text>
      <text class="px" x="216" y="426.7" textLength="38.7" lengthAdjust="spacingAndGlyphs">12:00</text>
      <text class="px" x="336" y="426.7" textLength="38.7" lengthAdjust="spacingAndGlyphs">12:00</text>
      <text class="px" x="456" y="426.7" textLength="38.7" lengthAdjust="spacingAndGlyphs">12:00</text>
      <text class="px" x="576" y="426.7" textLength="38.7" lengthAdjust="spacingAndGlyphs">12:00</text>
      <text class="px" x="96" y="438.3" textLength="48" lengthAdjust="spacingAndGlyphs">Mar 22</text>
      <text class="px" x="216" y="438.3" textLength="48" lengthAdjust="spacingAndGlyphs">Mar 24</text>
      <text class="px" x="336" y="438.3" textLength="48" lengthAdjust="spacingAndGlyphs">Mar 26</text>
      <text class="px" x="456" y="438.3" textLength="48" lengthAdjust="spacingAndGlyphs">Mar 28</text>
      <text class="px" x="576" y="438.3" textLength="48" lengthAdjust="spacingAndGlyphs">Mar 30</text>
      <text class="px" x="96" y="449.5" textLength="34.4" lengthAdjust="spacingAndGlyphs">2013</text>
      <text class="px" x="216" y="449.5" textLength="34.4" lengthAdjust="spacingAndGlyphs">2013</text>
      <text class="px" x="336" y="449.5" textLength="34.4" lengthAdjust="spacingAndGlyphs">2013</text>
      <text class="px" x="456" y="449.5" textLength="34.4" lengthAdjust="spacingAndGlyphs">2013</text>
      <text class="px" x="576" y="449.5" textLength="34.4" lengthAdjust="spacingAndGlyphs">2013</text>
      <text class="px" x="336" y="466" textLength="25" lengthAdjust="spacingAndGlyphs">HST</text>
      <path class="ln" d="M126 322.3H216"/>
      <path class="ln dot" d="M126 340.3H216"/>
      <path class="ln dash" d="M126 358.3H216"/>
      <path class="ln dd" d="M126 376.3H216"/>
      <text class="pt" x="228.6" y="327" textLength="140" lengthAdjust="spacingAndGlyphs">CH-1 Speed Ctrl</text>
      <text class="pt" x="379.6" y="327" textLength="39" lengthAdjust="spacingAndGlyphs">Last:</text>
      <text class="pt" x="434.7" y="327" textLength="90.5" lengthAdjust="spacingAndGlyphs">600.00 mV</text>
      <text class="pt" x="228.6" y="345" textLength="132.6" lengthAdjust="spacingAndGlyphs">CH-1 Readback</text>
      <text class="pt" x="379.6" y="345" textLength="39" lengthAdjust="spacingAndGlyphs">Last:</text>
      <text class="pt" x="428.6" y="345" textLength="100.9" lengthAdjust="spacingAndGlyphs">1118.00 mV</text>
      <text class="pt" x="228.6" y="363" textLength="140" lengthAdjust="spacingAndGlyphs">CH-2 Speed Ctrl</text>
      <text class="pt" x="379.6" y="363" textLength="39" lengthAdjust="spacingAndGlyphs">Last:</text>
      <text class="pt" x="428.6" y="363" textLength="100.9" lengthAdjust="spacingAndGlyphs">1416.68 mV</text>
      <text class="pt" x="228.6" y="381" textLength="132.6" lengthAdjust="spacingAndGlyphs">CH-2 Readback</text>
      <text class="pt" x="379.6" y="381" textLength="39" lengthAdjust="spacingAndGlyphs">Last:</text>
      <text class="pt" x="428.6" y="381" textLength="100.9" lengthAdjust="spacingAndGlyphs">1495.00 mV</text>
      <path class="ln" d="M156 299H576"/>
      <path class="ln dot" filter="url(#nzA)" d="M156 208L250 207.5L350 207.5L450 207L520 206.5L530 205L540 206.5L576 207"/>
      <path class="ln dash" d="M156 93.3H398V183.3H452.7V153.3H576"/>
      <path class="ln dd thick" filter="url(#nzA)" d="M156 108.3H398V100V154.3H452.7V138.3L520 138L530 136L540 138L576 138.3"/>
    </svg>
  </main>

  <footer class="foot">
    <div>Last modified: 03/21/2013 11:03</div>
    <div>Send questions or comments to:<a href="#">NIRC2 Support</a></div>
  </footer>
</div>
</body>
</html>
```

FILE: styles.css
```css
html, body {
  margin: 0;
  padding: 0;
}
body {
  background: #aa0000;
  font-family: "Liberation Sans", Arial, sans-serif;
}
.page {
  display: grid;
  grid-template-columns: 217px 894px;
  grid-template-rows: 79px auto auto;
  gap: 2px;
  width: 1113px;
  padding: 10px 0 12px 10px;
}

/* header */
.logo {
  background: #ffffff;
}
.logo svg {
  display: block;
}
.seg-light {
  fill: #bfd0e4;
}
.seg-dark {
  fill: #6783aa;
  stroke: #ffffff;
  stroke-width: 0.6;
}
.banner {
  text-align: center;
}
.banner h1 {
  margin: 0;
  font-size: 31px;
  line-height: 32px;
  font-weight: bold;
  font-variant: small-caps;
  letter-spacing: 2px;
  color: #eeeeee;
  text-shadow: 1px 1px 1px #4a4a4a;
}

/* sidebar */
.side {
  background: #ffffcc;
  padding: 19px 0 0 7px;
}
.nav {
  width: 156px;
  font-size: 13px;
  line-height: 16px;
}
.sec + .sec {
  margin-top: 13px;
}
.sec-title {
  font-weight: bold;
  color: #000000;
  text-decoration: underline;
}
.nav a {
  display: block;
  padding-left: 13px;
  text-indent: -7px;
  color: #ff0000;
  text-decoration: underline;
}
.nav a.b {
  color: #0000ee;
}
.nav hr {
  width: 155px;
  height: 0;
  margin: 12px 0 14px;
  border: 0;
  border-top: 1px solid #555555;
  border-bottom: 1px solid #d8d8c4;
}
.gsearch {
  width: 155px;
  margin: 14.7px 0 0;
}
.glogo {
  text-align: center;
  font-family: "Liberation Serif", "Times New Roman", serif;
  font-size: 22px;
  line-height: 24px;
}
.gb { color: #2f5fd8; }
.gr { color: #d5242a; }
.gy { color: #e9b00f; }
.gg { color: #1d9a3c; }
.tm {
  font-family: "Liberation Sans", sans-serif;
  font-size: 5px;
  color: #888888;
  vertical-align: 11px;
}
.gsearch .q {
  display: block;
  box-sizing: border-box;
  width: 155px;
  height: 22px;
  margin: 6px 0 0;
  padding: 0;
  border: 1px solid #c4c4c4;
  border-top-color: #a8a8a8;
  background: #ffffff;
}
.gsearch .btn {
  display: block;
  box-sizing: border-box;
  width: 113px;
  height: 22px;
  margin: 1px auto 0;
  padding: 0;
  font-family: "Liberation Sans", Arial, sans-serif;
  font-size: 13px;
  color: #000000;
  border: 1px solid #777777;
  border-radius: 3px;
  background: linear-gradient(#fbfbfb, #dadada);
}
.radios {
  display: flex;
  justify-content: center;
  align-items: center;
  height: 14px;
  margin-top: 5px;
  font-size: 10px;
  font-weight: bold;
  color: #000000;
}
.radios label {
  display: flex;
  align-items: center;
  margin-right: 5px;
}
.radios label:last-child {
  margin-right: 0;
}
.radios input {
  width: 12px;
  height: 12px;
  margin: 0 2px 0 0;
  accent-color: #2a4f9c;
}

/* main content */
.content {
  background: #ebbcbc;
  border: 2px solid #5c5c5c;
  padding: 0 9px 7px 17px;
}
.content h2 {
  margin: 31px 0 0;
  padding-left: 14px;
  font-size: 21px;
  line-height: 24px;
  font-weight: bold;
  text-align: center;
  font-variant: small-caps;
  letter-spacing: 5px;
}
.content h2 a {
  color: #ff0000;
  text-decoration: underline;
}
.content hr {
  height: 0;
  border: 0;
  border-top: 1px solid #5a5a5a;
  border-bottom: 1px solid #dcdcdc;
}
.content hr.rule {
  margin: 23px 0 7px;
}
.content hr.sep {
  margin: 7px 0 7.5px;
}

/* plots */
.plot {
  display: block;
  margin: 0 auto;
}
.plot .bg {
  fill: #ffffff;
}
.plot .fr {
  fill: none;
  stroke: #000000;
  stroke-width: 1.4;
}
.plot .ax {
  fill: none;
  stroke: #000000;
  stroke-width: 1.2;
}
.plot text {
  font-family: Lato, "DejaVu Sans", sans-serif;
  font-weight: 300;
  fill: #000000;
}
.plot .pt {
  font-size: 15.5px;
}
.plot .pk {
  font-size: 18.5px;
}
.plot .px {
  font-size: 13px;
  text-anchor: middle;
}
.plot .mid {
  text-anchor: middle;
}
.plot .end {
  text-anchor: end;
}
.plot .ln {
  fill: none;
  stroke: #000000;
  stroke-width: 1.6;
}
.plot .thick {
  stroke-width: 2.3;
}
.plot .dot {
  stroke-dasharray: 1.6 1.8;
  stroke-width: 1.6;
}
.plot .dash {
  stroke-dasharray: 9 5;
}
.plot .dd {
  stroke-dasharray: 6 2 1.5 2;
}

/* footer */
.foot {
  grid-column: 1 / 3;
  padding-top: 5.5px;
  text-align: center;
  font-family: "DejaVu Sans", Verdana, sans-serif;
  font-style: italic;
  font-size: 12px;
  line-height: 15px;
  letter-spacing: 0.2px;
  color: #ffe0e0;
}
.foot a {
  color: #0000ee;
}
```
